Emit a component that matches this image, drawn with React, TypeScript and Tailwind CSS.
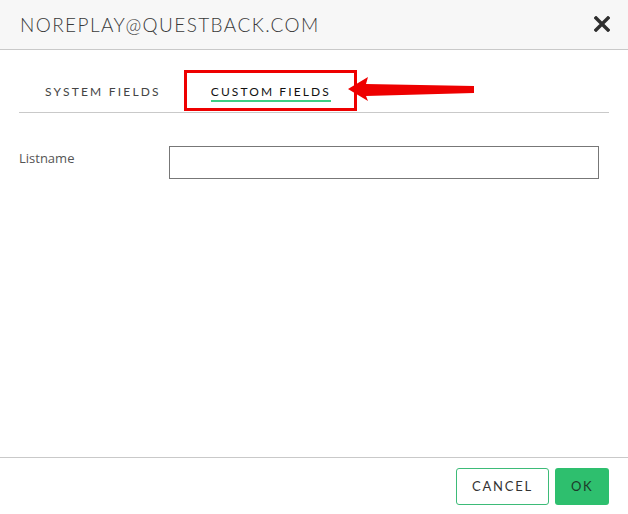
export default function App() {
    return (
        <div className="relative w-[628px] h-[514px] bg-white flex flex-col" style={{ fontFamily: "Lato, 'Open Sans', sans-serif" }}>
            <div className="h-[50px] shrink-0 bg-[#f7f7f7] border-b border-[#c9c9c9] flex items-center justify-between pl-[20px] pr-[18px]">
                <span className="text-[19px] font-light text-[#3a3a3a] tracking-[1.4px] leading-none">NOREPLAY@QUESTBACK.COM</span>
                <svg width="16" height="16" viewBox="0 0 16 16" className="mt-[-2px]">
                    <path d="M2 2 L14 14 M14 2 L2 14" stroke="#2f2f2f" strokeWidth="3.4" strokeLinecap="square" />
                </svg>
            </div>

            <div className="flex-1 px-[19px]">
                <div className="h-[63px] flex items-start pt-[34px] pl-[26px] gap-[50px] border-b border-[#c9c9c9]">
                    <span className="text-[12px] leading-[16px] tracking-[2.2px] text-[#444]">SYSTEM FIELDS</span>
                    <span className="text-[12px] leading-[16px] tracking-[2.1px] text-[#111] font-normal border-b-2 border-[#3dcf84]">CUSTOM FIELDS</span>
                </div>

                <div className="flex items-start mt-[33px]">
                    <label htmlFor="listname" className="w-[150px] pt-[3px] text-[13px] text-[#555]" style={{ fontFamily: "'Open Sans', sans-serif" }}>Listname</label>
                    <input id="listname" type="text" className="w-[430px] h-[33px] border border-[#777] outline-none px-2" />
                </div>
            </div>

            <div className="h-[57px] shrink-0 border-t border-[#c9c9c9] flex items-start justify-end gap-[6px] pt-[10px] pr-[19px]">
                <button type="button" className="w-[93px] h-[37px] rounded-[3px] border border-[#3dbb78] text-[13px] tracking-[1.8px] text-[#333] bg-white">
                    CANCEL
                </button>
                <button type="button" className="w-[54px] h-[37px] rounded-[3px] bg-[#2ebf6e] text-[13px] tracking-[1.5px] text-[#1d3a2a]">
                    OK
                </button>
            </div>

            {/* annotation overlay */}
            <div className="absolute left-[184px] top-[70px] w-[173px] h-[41px] border-[3px] border-[#ee0000]" />
            <svg className="absolute left-[340px] top-[70px]" width="140" height="36" viewBox="0 0 140 36">
                <polygon points="8,19 28,7 26,14 134,16 134,23 26,26 28,31" fill="#ee0000" />
            </svg>
        </div>
    )
}
